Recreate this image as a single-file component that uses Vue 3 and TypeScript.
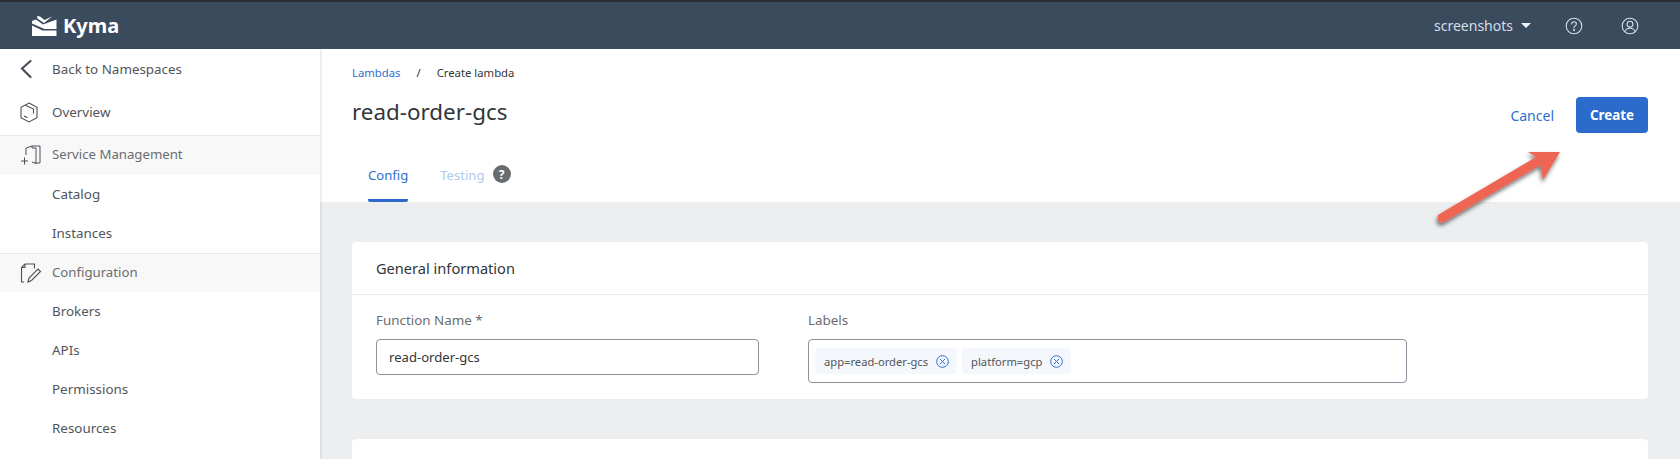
<script setup lang="ts">
const configItems: string[] = ['Brokers', 'APIs', 'Permissions', 'Resources']
const serviceItems: string[] = ['Catalog', 'Instances']
const labels: string[] = ['app=read-order-gcs', 'platform=gcp']
</script>

<template>
  <div class="app">
    <header class="top">
      <div class="brand">
        <svg class="logo" width="25" height="20" viewBox="0 0 25 20">
          <path d="M0 5 L4 3.5 L11 8.5 L24.5 3.5 V13 L12.5 13 L0 7.5 Z" fill="#fff" />
          <path d="M5 0 L8 0.5 L12.5 4 L20 0.5 L12 7 L5.5 2.5 Z" fill="#fff" />
          <path d="M0 9.5 L10.5 14.5 H24.5 V20 H0 Z" fill="#fff" />
        </svg>
        <span class="brand-name">Kyma</span>
      </div>
      <div class="top-right">
        <span class="ns">screenshots</span>
        <span class="caret"></span>
        <svg class="top-icon help" width="18" height="18" viewBox="0 0 18 18" fill="none" stroke="#d5dde6" stroke-width="1.1">
          <circle cx="9" cy="9" r="7.8" />
          <path d="M6.6 7 C6.7 5.5 7.7 4.8 9 4.8 C10.4 4.8 11.4 5.7 11.4 6.9 C11.4 8.7 9 8.7 9 10.8" stroke-linecap="round" />
          <circle cx="9" cy="13" r="0.5" fill="#d5dde6" />
        </svg>
        <svg class="top-icon" width="18" height="18" viewBox="0 0 18 18" fill="none" stroke="#d5dde6" stroke-width="1.1">
          <circle cx="9" cy="9" r="7.8" />
          <circle cx="9" cy="7.2" r="2.9" />
          <path d="M3.8 14.6 C4.6 12 6.4 11.2 9 11.2 C11.6 11.2 13.4 12 14.2 14.6" />
        </svg>
      </div>
    </header>

    <div class="body">
      <aside class="side">
        <div class="row back">
          <span class="ico">
            <svg width="12" height="20" viewBox="0 0 12 20" fill="none" stroke="#4a5058" stroke-width="2.2">
              <path d="M10.5 2 L2 9.5 L10.5 18" stroke-linecap="round" />
            </svg>
          </span>
          <span>Back to Namespaces</span>
        </div>
        <div class="row overview">
          <span class="ico">
            <svg width="18" height="21" viewBox="0 0 18 21" fill="none" stroke="#4a5058" stroke-width="1.1">
              <path d="M9 1 L17 5.3 V15.7 L9 20 L1 15.7 V5.3 Z" />
              <path d="M5.5 3.2 L13.5 7 V11.5" />
              <path d="M4 14 L7.5 15.8" />
            </svg>
          </span>
          <span>Overview</span>
        </div>
        <div class="row section sec1">
          <span class="ico">
            <svg width="22" height="20" viewBox="0 0 22 20" fill="none" stroke="#4a5058" stroke-width="1">
              <path d="M6 10 V3 L12 1 H20 V18 H15" />
              <path d="M12 1 V3 H16 V18.5 L12 17" />
              <path d="M1 16 H8 M4.5 12.5 V19.5" />
            </svg>
          </span>
          <span>Service Management</span>
        </div>
        <div v-for="item in serviceItems" :key="item" class="row sub">{{ item }}</div>
        <div class="row section sec2">
          <span class="ico">
            <svg width="22" height="20" viewBox="0 0 22 20" fill="none" stroke="#4a5058" stroke-width="1.1">
              <path d="M4 19 H1.5 V4.5 L5 1 H14.5 V5.5" />
              <path d="M5 1 V4.5 H1.5" />
              <path d="M8 19 L9 15 L18 6 L20.5 8.5 L11.5 17.5 Z" />
            </svg>
          </span>
          <span>Configuration</span>
        </div>
        <div v-for="item in configItems" :key="item" class="row sub">{{ item }}</div>
      </aside>

      <main class="main">
        <section class="head">
          <div class="crumbs">
            <span class="crumb-link">Lambdas</span>
            <span class="slash">/</span>
            <span>Create lambda</span>
          </div>
          <div class="title-row">
            <h1>read-order-gcs</h1>
            <div class="actions">
              <span class="cancel">Cancel</span>
              <span class="create">Create</span>
            </div>
          </div>
          <div class="tabs">
            <span class="tab active">Config</span>
            <span class="tab disabled">Testing</span>
            <span class="q">?</span>
          </div>
        </section>

        <section class="content">
          <div class="card">
            <div class="card-head">General information</div>
            <div class="card-body">
              <div class="field name-field">
                <div class="lbl">Function Name *</div>
                <div class="input">read-order-gcs</div>
              </div>
              <div class="field labels-field">
                <div class="lbl">Labels</div>
                <div class="input tags">
                  <span v-for="label in labels" :key="label" class="tag">
                    {{ label }}
                    <svg width="13" height="13" viewBox="0 0 13 13" fill="none" stroke="#2f6fd0" stroke-width="1">
                      <circle cx="6.5" cy="6.5" r="5.8" />
                      <path d="M4 4 L9 9 M9 4 L4 9" />
                    </svg>
                  </span>
                </div>
              </div>
            </div>
          </div>
          <div class="card second"></div>
        </section>
      </main>
    </div>

    <svg class="arrow" width="150" height="90" viewBox="0 0 150 90">
      <defs>
        <filter id="arrow-shadow" x="-20%" y="-20%" width="140%" height="150%">
          <feDropShadow dx="-1" dy="3" stdDeviation="2" flood-color="#000" flood-opacity="0.55" />
        </filter>
      </defs>
      <path
        d="M7.5 72 L104 15 L96 10 L128 10 L111 38 L108.5 23 L12 80 C7 83 3 75 7.5 72 Z"
        fill="#ee6553"
        filter="url(#arrow-shadow)"
      />
    </svg>
  </div>
</template>

<style>
html, body { margin: 0; background: #fff; }
</style>

<style scoped>
.app {
  position: relative;
  height: 459px;
  overflow: hidden;
  display: flex;
  flex-direction: column;
  font-family: "Noto Sans", "Open Sans", sans-serif;
  color: #32363a;
  font-size: 13.4px;
}
.top {
  height: 47px;
  flex: none;
  border-top: 2px solid #2c2f33;
  background: #3b4b5e;
  display: flex;
  align-items: center;
  justify-content: space-between;
}
.brand { display: flex; align-items: center; padding-left: 32px; }
.logo { margin-right: 6px; }
.brand-name { color: #fff; font-size: 20px; font-weight: 700; }
.top-right { display: flex; align-items: center; padding-right: 41px; color: #d5dde6; }
.ns { font-size: 14px; }
.caret {
  margin-left: 8px;
  border-left: 5px solid transparent;
  border-right: 5px solid transparent;
  border-top: 5px solid #eef2f6;
}
.top-icon { margin-left: 38px; }
.top-icon.help { margin-left: 34px; }
.body { flex: 1; display: flex; min-height: 0; }
.side {
  width: 320px;
  flex: none;
  background: #fff;
  box-shadow: 1px 0 2px rgba(0, 0, 0, 0.12);
  z-index: 1;
  color: #515559;
}
.row { display: flex; align-items: center; height: 39px; box-sizing: border-box; }
.ico { flex: none; width: 32px; margin-left: 20px; display: flex; align-items: center; }
.back { height: 40px; }
.overview { height: 46px; }
.section { background: #f8f8f8; border-top: 1px solid #e8e9ea; color: #6a6d70; padding-bottom: 3px; font-size: 13.2px; }
.sec1 { height: 40px; }
.section .ico { position: relative; top: 1px; }
.sub { padding-left: 52px; padding-bottom: 1px; }
.main { flex: 1; min-width: 0; background: #eceef0; }
.head { height: 153px; background: #fff; padding: 16px 32px 0 352px; margin-left: -320px; box-sizing: border-box; }
.crumbs { font-size: 11.3px; line-height: 16px; display: flex; align-items: center; }
.crumb-link { color: #2f6fd0; }
.slash { margin: 0 16px; }
.title-row { display: flex; justify-content: space-between; align-items: center; margin-top: 10px; height: 48px; }
h1 { margin: 0 0 8px; font-size: 22.4px; font-weight: 400; }
.actions { display: flex; align-items: center; }
.cancel { color: #2f6fd0; margin-right: 22px; font-size: 14px; }
.create {
  width: 72px;
  height: 36px;
  display: flex;
  align-items: center;
  justify-content: center;
  border-radius: 4px;
  background: #2a6bcb;
  color: #fff;
  font-weight: 700;
}
.tabs { display: flex; align-items: center; padding-left: 16px; height: 42px; margin-top: 21px; }
.tab { height: 42px; line-height: 30px; box-sizing: border-box; font-size: 13.1px; }
.tab.active { color: #2f6fd0; border-bottom: 3px solid #2a6bcb; border-radius: 2px; margin-right: 32px; }
.tab.disabled { color: #b0c9ed; }
.q {
  width: 18px;
  height: 18px;
  border-radius: 50%;
  background: #6a6d70;
  color: #fff;
  font-size: 12px;
  font-weight: 700;
  margin-left: 8px;
  display: flex;
  align-items: center;
  justify-content: center;
  position: relative;
  top: -7px;
}
.content { padding: 40px 32px 0; }
.card { background: #fff; border-radius: 4px; box-shadow: 0 0 1px rgba(0, 0, 0, 0.06); }
.card-head { height: 53px; display: flex; align-items: center; padding-left: 24px; padding-bottom: 1px; font-size: 14.6px; border-bottom: 1px solid #eceef0; box-sizing: border-box; }
.card-body { display: flex; padding: 16px 24px 0; height: 104px; box-sizing: border-box; }
.field { display: flex; flex-direction: column; }
.name-field { width: 383px; margin-right: 49px; }
.labels-field { width: 599px; }
.lbl { color: #6a6d70; line-height: 18px; margin-bottom: 10px; }
.input {
  height: 36px;
  border: 1px solid #89919a;
  border-radius: 4px;
  box-sizing: border-box;
  display: flex;
  align-items: center;
  padding: 0 0 1px 12px;
  font-size: 13.1px;
}
.tags { height: 44px; padding: 0 0 0 6px; gap: 5px; }
.tag {
  height: 26px;
  display: flex;
  align-items: center;
  gap: 8px;
  padding: 0 8px 0 9px;
  background: #f4f7fc;
  border-radius: 4px;
  font-size: 11.2px;
  color: #515559;
}
.second { margin-top: 40px; height: 60px; }
.arrow { position: absolute; left: 1432px; top: 142px; z-index: 2; pointer-events: none; }
</style>
